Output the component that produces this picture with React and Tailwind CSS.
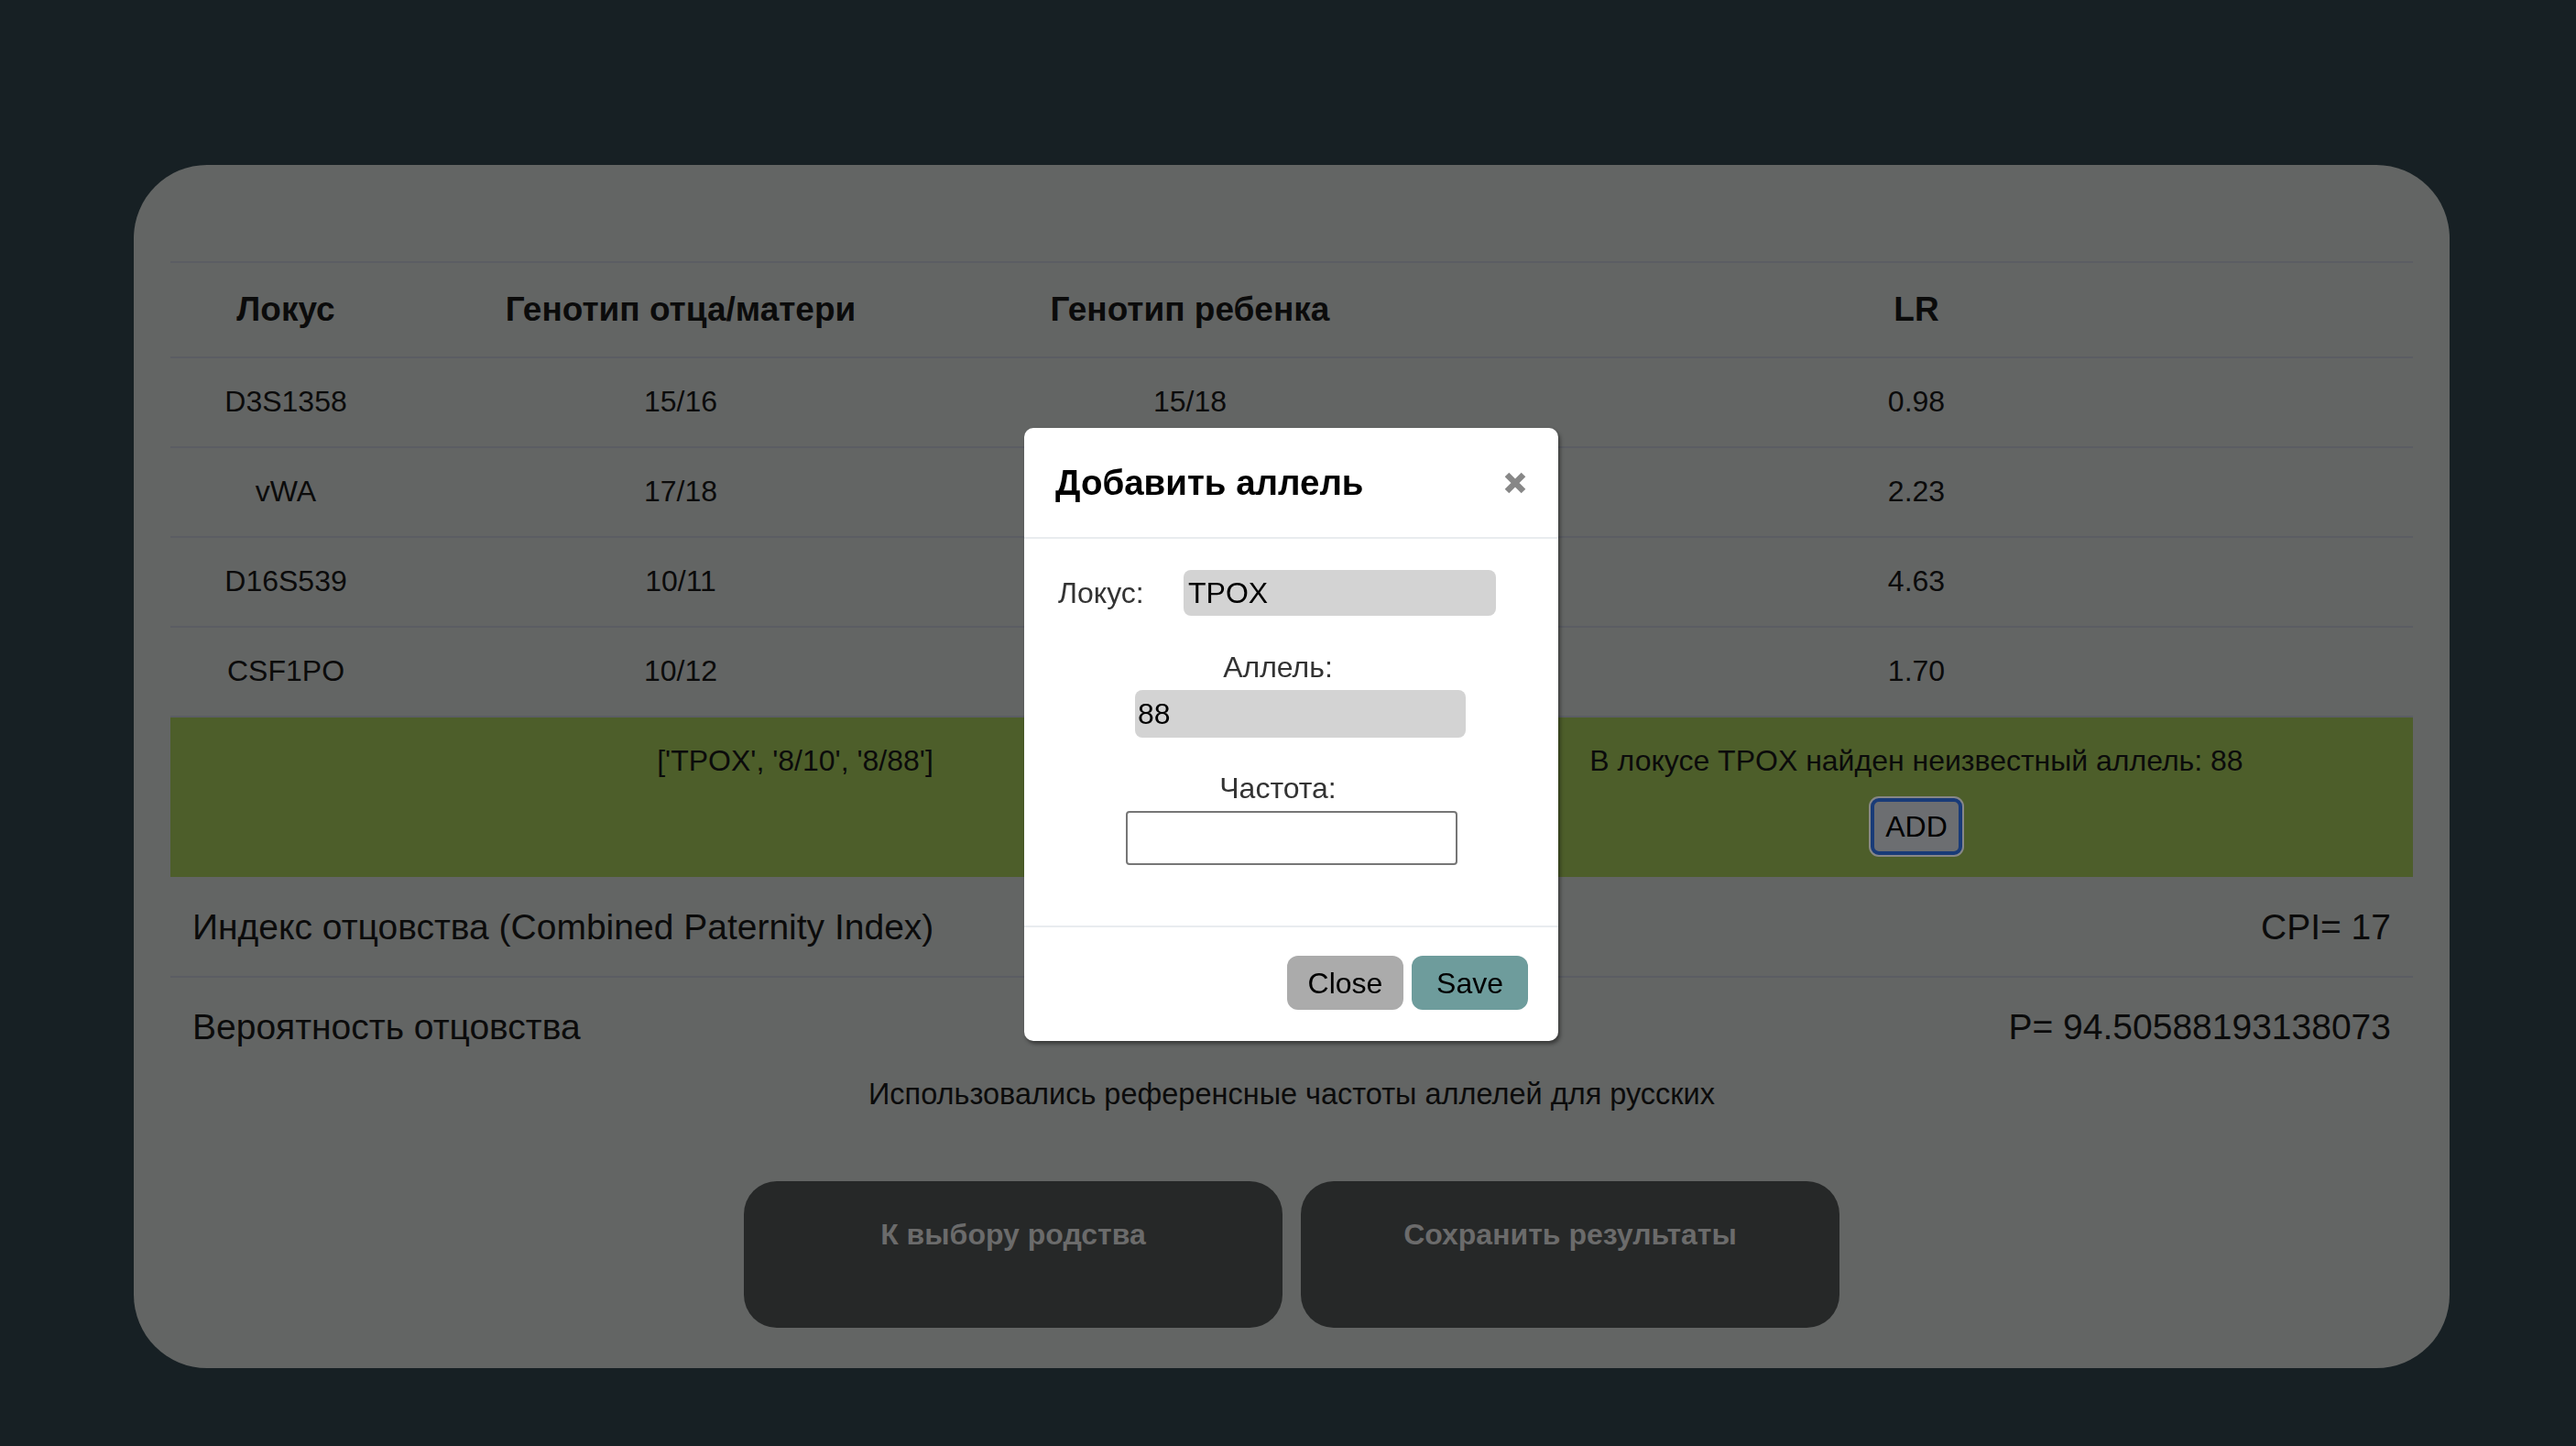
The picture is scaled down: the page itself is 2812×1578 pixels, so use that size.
import { useState } from 'react'

const ROWS = [
  { locus: 'D3S1358', parent: '15/16', child: '15/18', lr: '0.98' },
  { locus: 'vWA', parent: '17/18', child: '17/18', lr: '2.23' },
  { locus: 'D16S539', parent: '10/11', child: '11/12', lr: '4.63' },
  { locus: 'CSF1PO', parent: '10/12', child: '10/12', lr: '1.70' },
]

function AddAlleleModal({ onClose }) {
  const [freq, setFreq] = useState('')

  return (
    <div className="fixed left-[1118px] top-[467px] w-[583px] bg-white rounded-[10px] shadow-[2px_3px_4px_rgba(0,0,0,0.45)] text-[#212529]">
      {/* header */}
      <div className="flex items-center justify-between h-[121px] pl-[34px] pr-[34px] border-b-2 border-[#e9ecef]">
        <h5 className="text-[38.5px] font-bold text-black leading-[48px]">Добавить аллель</h5>
        <button onClick={onClose} className="w-[26px] h-[26px] flex items-center justify-center">
          <svg width="26" height="26" viewBox="0 0 26 26">
            <path d="M4 4 L22 22 M22 4 L4 22" stroke="#878787" strokeWidth="6.5" strokeLinecap="butt" />
          </svg>
        </button>
      </div>

      {/* body */}
      <div className="pt-[34px] pb-[66px] text-[32px] leading-[48px]">
        <div className="flex items-center pl-[37px]">
          <label className="w-[137px] text-[#333]">Локус:</label>
          <input
            readOnly
            value="TPOX"
            className="w-[341px] h-[50px] bg-[#d3d3d3] rounded-[8px] px-[5px] text-[32px] text-black outline-none"
          />
        </div>
        <div className="w-[554px] text-center mt-[32px] text-[#333]">Аллель:</div>
        <input
          readOnly
          value="88"
          className="block ml-[121px] mt-[1px] w-[361px] h-[52px] bg-[#d3d3d3] rounded-[8px] px-[3px] text-[32px] text-black outline-none"
        />
        <div className="w-[554px] text-center mt-[31px] text-[#333]">Частота:</div>
        <input
          value={freq}
          onChange={e => setFreq(e.target.value)}
          className="block ml-[111px] mt-[1px] w-[362px] h-[59px] bg-white border-2 border-[#767676] rounded-[4px] px-[6px] text-[32px] text-black outline-none"
        />
      </div>

      {/* footer */}
      <div className="flex justify-end gap-[9px] pt-[31px] pb-[34px] pr-[33px] border-t-2 border-[#e9ecef]">
        <button onClick={onClose} className="w-[127px] h-[59px] rounded-[12px] bg-[#ababab] text-[32px] text-black">
          Close
        </button>
        <button className="w-[127px] h-[59px] rounded-[12px] bg-[#6e9c9c] text-[32px] text-black">
          Save
        </button>
      </div>
    </div>
  )
}

export default function App() {
  const [showModal, setShowModal] = useState(true)

  return (
    <div
      className="min-h-screen bg-[#172024] pt-[180px] pb-[86px] text-[#0b0b0b]"
      style={{ fontFamily: '"Liberation Sans", Arial, sans-serif' }}
    >
      <div className="ml-[146px] w-[2528px] bg-[#636564] rounded-[80px] pt-[105px] pb-[44px] px-[40px]">
        {/* results table */}
        <table className="w-full table-fixed border-collapse text-[32px] leading-[48px] text-center">
          <thead>
            <tr>
              <th className="w-[252px] border-t-2 border-[#5b5d63] py-[24px] text-[37px] leading-[54px] font-bold">Локус</th>
              <th className="w-[610px] border-t-2 border-[#5b5d63] py-[24px] text-[37px] leading-[54px] font-bold">Генотип отца/матери</th>
              <th className="w-[502px] border-t-2 border-[#5b5d63] py-[24px] text-[37px] leading-[54px] font-bold">Генотип ребенка</th>
              <th className="border-t-2 border-[#5b5d63] py-[24px] text-[37px] leading-[54px] font-bold">LR</th>
            </tr>
          </thead>
          <tbody>
            {ROWS.map(r => (
              <tr key={r.locus}>
                <td className="border-t-2 border-[#5b5d63] pt-[23px] pb-[25px]">{r.locus}</td>
                <td className="border-t-2 border-[#5b5d63] pt-[23px] pb-[25px]">{r.parent}</td>
                <td className="border-t-2 border-[#5b5d63] pt-[23px] pb-[25px]">{r.child}</td>
                <td className="border-t-2 border-[#5b5d63] pt-[23px] pb-[25px]">{r.lr}</td>
              </tr>
            ))}
            <tr className="bg-[#4d5e2a]">
              <td colSpan={3} className="border-t-2 border-[#5b5d63] pt-[23px] align-top">
                ['TPOX', '8/10', '8/88']
              </td>
              <td className="border-t-2 border-[#5b5d63] pt-[23px] pb-[24px] align-top">
                <div>В локусе TPOX найден неизвестный аллель: 88</div>
                <button
                  onClick={() => setShowModal(true)}
                  className="mt-[17px] w-[100px] h-[62px] rounded-[9px] bg-[#6c6e71] border-[4px] border-[#193b78] ring-2 ring-[#878787] text-[32px] text-black leading-none"
                >
                  ADD
                </button>
              </td>
            </tr>
          </tbody>
        </table>

        {/* paternity summary */}
        <div className="text-[39px] leading-[60px]">
          <div className="flex justify-between px-[24px] pt-[25px] pb-[23px]">
            <span>Индекс отцовства (Combined Paternity Index)</span>
            <span>CPI= 17</span>
          </div>
          <div className="flex justify-between px-[24px] pt-[24px] pb-[19px] border-t-2 border-[#5b5d63]">
            <span>Вероятность отцовства</span>
            <span>P= 94.50588193138073</span>
          </div>
        </div>
        <p className="text-center text-[32.5px] leading-[48px]">
          Использовались референсные частоты аллелей для русских
        </p>

        {/* actions */}
        <div className="flex justify-center gap-[20px] mt-[71px]">
          <button className="w-[588px] h-[160px] rounded-[36px] bg-[#262828] text-[#6b6b6b] text-[32px] font-bold leading-[48px] pt-[34px] flex justify-center items-start">
            К выбору родства
          </button>
          <button className="w-[588px] h-[160px] rounded-[36px] bg-[#262828] text-[#6b6b6b] text-[32px] font-bold leading-[48px] pt-[34px] flex justify-center items-start">
            Сохранить результаты
          </button>
        </div>
      </div>

      {showModal && <AddAlleleModal onClose={() => setShowModal(false)} />}
    </div>
  )
}
